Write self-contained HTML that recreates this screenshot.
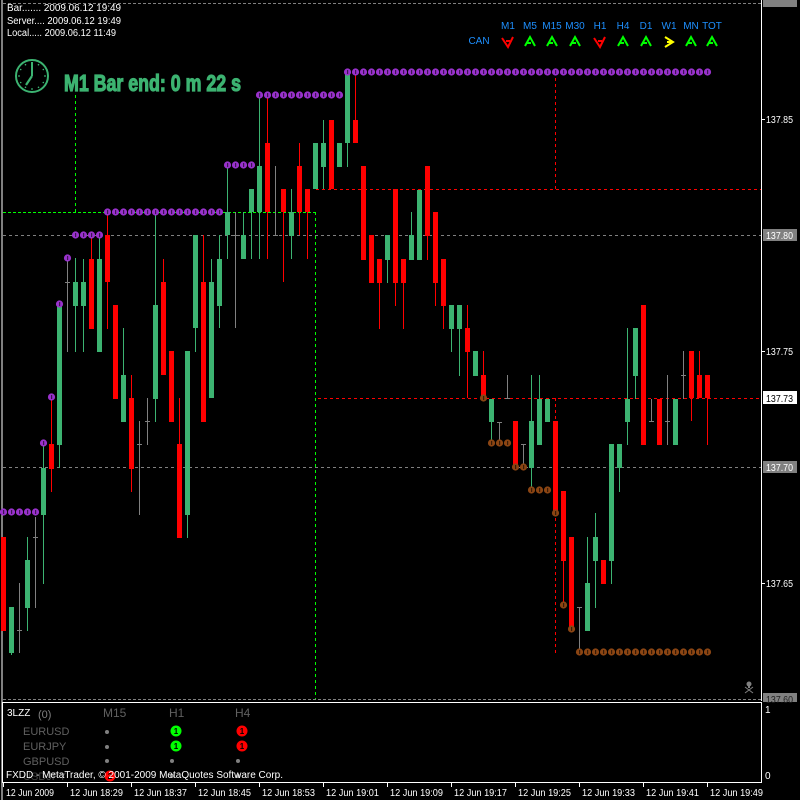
<!DOCTYPE html>
<html><head><meta charset="utf-8"><style>
html,body{margin:0;padding:0;background:#000;width:800px;height:800px;overflow:hidden}
svg{display:block}
text{font-family:"Liberation Sans",sans-serif}
</style></head><body>
<svg id="s" width="800" height="800" xmlns="http://www.w3.org/2000/svg">
<rect width="800" height="800" fill="#000"/>
<line x1="2" y1="0" x2="2" y2="800" stroke="#fff" stroke-width="1"/>
<line x1="3" y1="3.5" x2="761" y2="3.5" stroke="#808080" stroke-dasharray="3,2"/>
<line x1="3" y1="699.5" x2="761" y2="699.5" stroke="#808080" stroke-dasharray="3,2"/>
<line x1="761.5" y1="0" x2="761.5" y2="701" stroke="#fff"/>
<line x1="3" y1="235.5" x2="761" y2="235.5" stroke="#808080" stroke-dasharray="3,3"/>
<line x1="3" y1="467.5" x2="761" y2="467.5" stroke="#808080" stroke-dasharray="3,3"/>
<line x1="3" y1="212.5" x2="315" y2="212.5" stroke="#00ff00" stroke-dasharray="3,2"/>
<line x1="315.5" y1="212" x2="315.5" y2="699" stroke="#00ff00" stroke-dasharray="3,3"/>
<line x1="75.5" y1="95" x2="75.5" y2="212" stroke="#00ff00" stroke-dasharray="3,3"/>
<line x1="318" y1="398.5" x2="761" y2="398.5" stroke="#ff0000" stroke-dasharray="3,3"/>
<line x1="316" y1="189.5" x2="761" y2="189.5" stroke="#ff0000" stroke-dasharray="3,3"/>
<line x1="555.5" y1="72" x2="555.5" y2="189" stroke="#ff0000" stroke-dasharray="3,3"/>
<line x1="555.5" y1="398" x2="555.5" y2="653" stroke="#ff0000" stroke-dasharray="3,3"/>
<g id="c"></g>
<g fill="#fff" font-size="10">
<text x="7" y="11" textLength="114" lengthAdjust="spacingAndGlyphs">Bar....... 2009.06.12 19:49</text>
<text x="7" y="24" textLength="114" lengthAdjust="spacingAndGlyphs">Server.... 2009.06.12 19:49</text>
<text x="7" y="36" textLength="109" lengthAdjust="spacingAndGlyphs">Local..... 2009.06.12 11:49</text>
</g>
<g stroke="#3cb371" fill="none">
<circle cx="32" cy="76" r="16" stroke-width="2"/>
<line x1="32" y1="76" x2="32" y2="62" stroke-width="2"/>
<line x1="32" y1="76" x2="26" y2="85" stroke-width="2.2"/>
</g>
<g fill="#3cb371">
<circle cx="32" cy="63" r="0.9"/><circle cx="32" cy="89" r="0.9"/><circle cx="19" cy="76" r="0.9"/><circle cx="45" cy="76" r="0.9"/>
<circle cx="25.5" cy="64.7" r="0.8"/><circle cx="38.5" cy="64.7" r="0.8"/><circle cx="20.7" cy="69.5" r="0.8"/><circle cx="43.3" cy="69.5" r="0.8"/>
<circle cx="20.7" cy="82.5" r="0.8"/><circle cx="43.3" cy="82.5" r="0.8"/><circle cx="25.5" cy="87.3" r="0.8"/><circle cx="38.5" cy="87.3" r="0.8"/>
</g>
<text x="64" y="91" fill="#3cb371" stroke="#3cb371" stroke-width="1.2" font-size="23" font-weight="bold" textLength="177" lengthAdjust="spacingAndGlyphs">M1 Bar end: 0 m 22 s</text>
<g fill="#1e90ff" font-size="10" text-anchor="middle">
<text x="508" y="29">M1</text><text x="530" y="29">M5</text><text x="552" y="29">M15</text><text x="575" y="29">M30</text>
<text x="600" y="29">H1</text><text x="623" y="29">H4</text><text x="646" y="29">D1</text><text x="669" y="29">W1</text>
<text x="691" y="29">MN</text><text x="712" y="29">TOT</text>
<text x="479" y="44">CAN</text>
</g>
<g id="arr"></g>
<g font-size="10" fill="#fff">
<rect x="763" y="0" width="34" height="7" fill="#808080"/>
<line x1="762" y1="119.5" x2="765" y2="119.5" stroke="#fff"/><text x="766" y="123" textLength="27" lengthAdjust="spacingAndGlyphs">137.85</text>
<rect x="763" y="229" width="34" height="12" fill="#808080"/><text x="766" y="239" textLength="27" lengthAdjust="spacingAndGlyphs">137.80</text>
<line x1="762" y1="351.5" x2="765" y2="351.5" stroke="#fff"/><text x="766" y="355" textLength="27" lengthAdjust="spacingAndGlyphs">137.75</text>
<rect x="763" y="391" width="34" height="13" fill="#fff"/><text x="766" y="402" fill="#000" textLength="27" lengthAdjust="spacingAndGlyphs">137.73</text>
<rect x="763" y="461" width="34" height="12" fill="#808080"/><text x="766" y="471" textLength="27" lengthAdjust="spacingAndGlyphs">137.70</text>
<line x1="762" y1="583.5" x2="765" y2="583.5" stroke="#fff"/><text x="766" y="587" textLength="27" lengthAdjust="spacingAndGlyphs">137.65</text>
<rect x="763" y="693" width="34" height="9" fill="#808080"/><text x="766" y="703" fill="#202020" textLength="27" lengthAdjust="spacingAndGlyphs">137.60</text>
</g>
<g fill="#808080">
<circle cx="749" cy="684" r="2.5"/><rect x="748" y="686" width="2" height="2"/>
<line x1="745" y1="687" x2="753" y2="693" stroke="#808080"/><line x1="753" y1="687" x2="745" y2="693" stroke="#808080"/>
</g>
<rect x="2.5" y="702.5" width="759" height="80" fill="none" stroke="#fff"/>
<g font-size="10">
<text x="7" y="716" fill="#fff">3LZZ</text>
<text x="38" y="718" fill="#808080" font-size="11">(0)</text>
<text x="103" y="717" fill="#606060" font-size="12">M15</text>
<text x="169" y="717" fill="#606060" font-size="12">H1</text>
<text x="235" y="717" fill="#606060" font-size="12">H4</text>
<text x="23" y="735" fill="#606060" font-size="11">EURUSD</text>
<text x="23" y="750" fill="#606060" font-size="11">EURJPY</text>
<text x="23" y="765" fill="#606060" font-size="11">GBPUSD</text>
<text x="23" y="780" fill="#404040" font-size="11">USDJPY</text>
</g>
<g fill="#808080">
<circle cx="107" cy="732" r="2"/><circle cx="107" cy="747" r="2"/><circle cx="107" cy="761" r="2"/>
<circle cx="172" cy="761" r="2"/><circle cx="238" cy="761" r="2"/>
<circle cx="172" cy="776" r="2"/><circle cx="238" cy="776" r="2"/>
</g>
<g font-size="8" font-weight="bold" text-anchor="middle">
<circle cx="176" cy="731" r="5.5" fill="#00ff00"/><text x="176" y="734" fill="#000">1</text>
<circle cx="176" cy="746" r="5.5" fill="#00ff00"/><text x="176" y="749" fill="#000">1</text>
<circle cx="242" cy="731" r="5.5" fill="#ff0000"/><text x="242" y="734" fill="#000">1</text>
<circle cx="242" cy="746" r="5.5" fill="#ff0000"/><text x="242" y="749" fill="#000">1</text>
<circle cx="110" cy="776" r="5.5" fill="#ff0000"/><text x="110" y="779" fill="#000">2</text>
</g>
<text x="6" y="778" fill="#fff" font-size="10" textLength="277" lengthAdjust="spacingAndGlyphs">FXDD - MetaTrader, © 2001-2009 MetaQuotes Software Corp.</text>
<text x="765" y="713" fill="#fff" font-size="10">1</text>
<text x="765" y="779" fill="#fff" font-size="10">0</text>
<g id="t" fill="#fff" font-size="10.5"></g>
</svg>
<script>
var D=[[-1,'r',537,631],[0,'g',607,653,607,655],[1,'d',630,630,583,653],[2,'g',560,608,537,631],[3,'d',537,537,517,608],[4,'g',468,515,445,584],[5,'r',444,469,398,492],[6,'g',304,445,304,468],[7,'d',282,282,258,352],[8,'g',282,306,258,352],[9,'g',282,306,259,352],[10,'r',259,329,235,329],[11,'g',259,352,235,352],[12,'r',235,282,212,329],[13,'r',305,399],[14,'g',375,422,328,422],[15,'r',398,469,375,492],[16,'d',444,444,421,515],[17,'d',421,421,398,445],[18,'g',305,399,212,422],[19,'r',282,375,259,375],[20,'r',351,422],[21,'r',444,538,398,538],[22,'g',351,515,351,538],[23,'g',235,328,235,352],[24,'r',282,422,235,422],[25,'g',282,398,259,398],[26,'g',259,306,235,328],[27,'g',212,235,165,259],[28,'d',235,235,212,328],[29,'g',235,259,212,259],[30,'g',189,212,189,259],[31,'g',166,212,95,259],[32,'r',143,212,95,259],[33,'d',235,235,166,235],[34,'r',189,212,189,282],[35,'g',212,236,189,259],[36,'r',166,212,143,235],[37,'r',189,212,189,259],[38,'g',143,189],[39,'g',143,167,120,189],[40,'r',120,189],[41,'g',143,167],[42,'g',73,143,73,167],[43,'r',120,143,73,143],[44,'r',166,260],[45,'r',235,283],[46,'r',259,283,259,329],[47,'g',235,260,235,283],[48,'r',189,283,189,306],[49,'r',259,283,259,329],[50,'g',235,260,212,260],[51,'g',190,260],[52,'r',166,236,166,260],[53,'r',212,283,212,306],[54,'r',259,306,259,329],[55,'g',305,329,305,352],[56,'g',305,329,305,376],[57,'r',328,352,305,398],[58,'g',351,376],[59,'r',375,398,351,398],[60,'g',399,422,399,443],[61,'d',422,422,422,443],[62,'d',398,398,375,398],[63,'r',421,467],[64,'d',444,444,444,467],[65,'g',421,468,375,490],[66,'g',399,445,375,445],[67,'g',399,422],[68,'r',421,513],[69,'r',491,561,491,605],[70,'r',537,630],[71,'d',607,607,607,652],[72,'g',583,631,537,631],[73,'g',537,561,513,608],[74,'r',560,584],[75,'g',444,561,444,584],[76,'g',444,468,444,492],[77,'g',399,422,328,445],[78,'g',328,376,328,399],[79,'r',305,445],[80,'d',421,421,399,421],[81,'r',399,445],[82,'d',421,421,375,445],[83,'g',399,445],[84,'d',375,375,351,399],[85,'r',351,398,351,421],[86,'r',375,398,351,398],[87,'r',375,398,375,445]];
var C={g:'#3cb371',r:'#ff0000',d:'#808080'};var h='';
D.forEach(function(a){var x=11+8*a[0],col=C[a[1]],wt=a[4]||a[2],wb=a[5]||a[3];
if(wt<a[2]||wb>a[3])h+='<rect x="'+x+'" y="'+wt+'" width="1" height="'+(wb-wt)+'" fill="'+col+'"/>';
if(a[1]=='d')h+='<rect x="'+(x-2)+'" y="'+a[2]+'" width="5" height="1" fill="'+col+'"/>';
else h+='<rect x="'+(x-2)+'" y="'+a[2]+'" width="5" height="'+Math.max(1,a[3]-a[2])+'" fill="'+col+'"/>';});
function dot(x,y,c){h+='<circle cx="'+x+'" cy="'+y+'" r="3.6" fill="'+c+'"/><rect x="'+(x-0.5)+'" y="'+(y-2)+'" width="1.2" height="4" fill="#000" opacity="0.6"/>';}
var P='#9932cc',B='#8b4513';
for(var k=-1;k<=3;k++)dot(11.5+8*k,512,P);
dot(43.5,443,P);dot(51.5,397,P);dot(59.5,304,P);dot(67.5,258,P);
for(k=8;k<=11;k++)dot(11.5+8*k,235,P);
for(k=12;k<=26;k++)dot(11.5+8*k,212,P);
for(k=27;k<=30;k++)dot(11.5+8*k,165,P);
for(k=31;k<=41;k++)dot(11.5+8*k,95,P);
for(k=42;k<=87;k++)dot(11.5+8*k,72,P);
dot(483.5,398,B);dot(491.5,443,B);dot(499.5,443,B);dot(507.5,443,B);dot(515.5,467,B);dot(523.5,467,B);
dot(531.5,490,B);dot(539.5,490,B);dot(547.5,490,B);dot(555.5,513,B);dot(563.5,605,B);dot(571.5,629,B);
for(k=71;k<=87;k++)dot(11.5+8*k,652,B);
document.getElementById('c').innerHTML=h;
var ax=[508,530,552,575,600,623,646,669,691,712],at=['d','u','u','u','d','u','u','s','u','u'],a='';
ax.forEach(function(x,i){var t=at[i];
if(t=='u')a+='<path d="M'+(x-5)+' 46 L'+x+' 37 L'+(x+5)+' 46 M'+(x-3)+' 43 L'+(x+1)+' 43" stroke="#00ff00" stroke-width="2" fill="none"/>';
else if(t=='d')a+='<path d="M'+(x-6)+' 38 L'+x+' 47 L'+(x+5)+' 37 M'+(x-2)+' 41 L'+(x+2)+' 41" stroke="#ff0000" stroke-width="2" fill="none"/>';
else a+='<path d="M'+(x-4)+' 37 L'+(x+4)+' 42 L'+(x-4)+' 47 M'+(x-2)+' 42 L'+(x+2)+' 42" stroke="#ffff00" stroke-width="2" fill="none"/>';});
document.getElementById('arr').innerHTML=a;
var L=['12 Jun 2009','12 Jun 18:29','12 Jun 18:37','12 Jun 18:45','12 Jun 18:53','12 Jun 19:01','12 Jun 19:09','12 Jun 19:17','12 Jun 19:25','12 Jun 19:33','12 Jun 19:41','12 Jun 19:49'],t='';
L.forEach(function(s,i){var x=3+64*i;t+='<rect x="'+x+'" y="783" width="1" height="4" fill="#fff"/><text x="'+(x+3)+'" y="796" textLength="'+(i==0?48:53)+'" lengthAdjust="spacingAndGlyphs">'+s+'</text>';});
document.getElementById('t').innerHTML=t;
</script>
</body></html>
